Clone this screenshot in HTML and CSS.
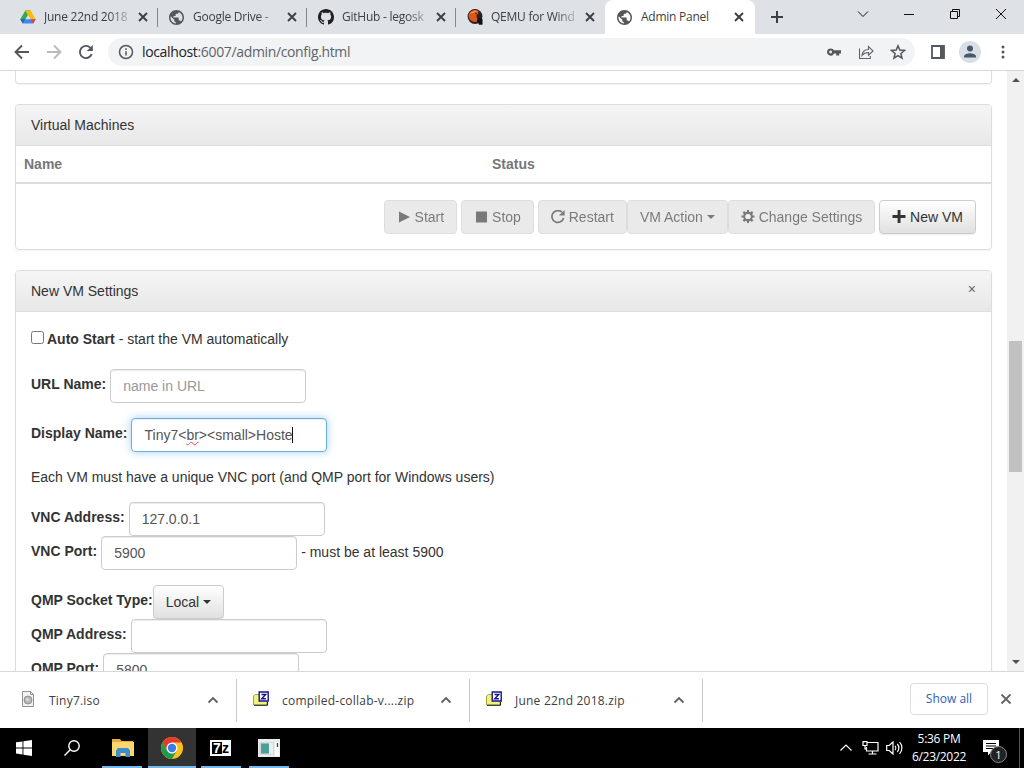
FILE: index.html
```html
<!DOCTYPE html>
<html lang="en">
<head>
    <meta charset="UTF-8">
    <meta name="viewport" content="width=device-width, initial-scale=1.0">
    <title>Admin Panel</title>
    <link rel="stylesheet" href="styles.css">
</head>
<body>
    <!-- Shared icons -->
    <svg class="defs" width="0" height="0">
        <symbol id="globe" viewBox="2 2 20 20"><path d="M12 2C6.48 2 2 6.48 2 12s4.48 10 10 10 10-4.48 10-10S17.52 2 12 2zm-1 17.93c-3.95-.49-7-3.85-7-7.93 0-.62.08-1.21.21-1.79L9 15v1c0 1.100.9 2 2 2v1.930zm6.900-2.540c-.26-.81-1-1.390-1.900-1.390h-1v-3c0-.55-.45-1-1-1H8v-2h2c.55 0 1-.45 1-1V7h2c1.100 0 2-.9 2-2v-.41c2.930 1.190 5 4.060 5 7.410 0 2.080-.8 3.970-2.100 5.390z"/></symbol>
        <symbol id="close" viewBox="0 0 16 16"><path d="M4 4l8 8M12 4l-8 8" fill="none" stroke="currentColor" stroke-width="1.9"/></symbol>
        <symbol id="up" viewBox="0 0 16 16"><path d="M3.500 10.500L8 6l4.500 4.500" fill="none" stroke="currentColor" stroke-width="1.900"/></symbol>
        <symbol id="zip" viewBox="0 0 16 16"><path d="M.5 5l2-1.500H14V13l-1 1H.5z" fill="#f2f37c" stroke="#a3a33c"/><path d="M1 14.300h13.500V11" stroke="#222" fill="none"/><path d="M6.200 1h9v9h-9z" fill="#fff" stroke="#14148a" stroke-width="1.400"/><path d="M8.500 3.500h4.200L8.700 7.800h4.200" fill="none" stroke="#14148a" stroke-width="1.400"/></symbol>
    </svg>

    <!-- Tab strip -->
    <div class="tabstrip">
        <div class="tab">
            <svg class="favicon" viewBox="0 0 16 16"><path d="M5.400 1.500h5.200L8 6z" fill="#188038"/><path d="M5.400 1.500L8 6l-5.200 8.500L.3 10.200z" fill="#34a853"/><path d="M5.400 1.500h5.200l5.100 8.700h-5.200z" fill="#fbbc04"/><path d="M5.500 10.200h10.200l-2.500 4.300H2.800z" fill="#4285f4"/><path d="M10.500 10.200h5.200l-2.500 4.300z" fill="#ea4335"/><path d="M.3 10.200h5.200l-2.700 4.300z" fill="#1967d2"/></svg>
            <span class="tab-title fade">June 22nd 2018</span>
            <svg class="tab-close"><use href="#close"/></svg>
        </div>
        <div class="tab">
            <svg class="favicon globe"><use href="#globe"/></svg>
            <span class="tab-title fade">Google Drive - </span>
            <svg class="tab-close"><use href="#close"/></svg>
        </div>
        <div class="tab">
            <svg class="favicon" viewBox="0 0 16 16"><path fill="#202124" d="M8 0C3.580 0 0 3.580 0 8c0 3.540 2.290 6.530 5.470 7.590.4.07.55-.17.55-.38 0-.19-.01-.82-.01-1.490-2.010.37-2.530-.49-2.690-.94-.09-.23-.48-.94-.82-1.130-.28-.15-.68-.52-.01-.53.63-.01 1.080.58 1.230.82.72 1.210 1.870.87 2.330.66.07-.52.28-.87.51-1.070-1.780-.2-3.640-.89-3.640-3.950 0-.87.31-1.590.82-2.150-.08-.2-.36-1.020.08-2.120 0 0 .67-.21 2.200.82.64-.18 1.320-.27 2-.27s1.360.09 2 .27c1.530-1.040 2.200-.82 2.200-.82.44 1.100.16 1.920.08 2.120.51.56.82 1.270.82 2.150 0 3.070-1.870 3.750-3.650 3.950.29.25.54.73.54 1.480 0 1.070-.01 1.930-.01 2.200 0 .21.15.46.55.38A8.010 8.010 0 0 0 16 8c0-4.420-3.580-8-8-8z"/></svg>
            <span class="tab-title fade">GitHub - legosk</span>
            <svg class="tab-close"><use href="#close"/></svg>
        </div>
        <div class="tab last">
            <svg class="favicon" viewBox="0 0 16 16"><circle cx="8" cy="7.500" r="7.400" fill="#26201e"/><path d="M9 9l6.500 1v5.800h-3.500z" fill="#111"/><path d="M1.500 7C2 2 7-.5 12 2c-1 1-1 1.500-.5 3-2.500.5-2.500 3-1 5l-1 3C5 13 2 11 1.500 7z" fill="#dd561d"/><path d="M3 5c2-3 5-3.500 7-2.500C7 3.500 5 4 3 5z" fill="#f59b63"/><circle cx="9" cy="4.500" r=".8" fill="#222"/></svg>
            <span class="tab-title fade">QEMU for Wind</span>
            <svg class="tab-close"><use href="#close"/></svg>
        </div>
        <div class="tab active">
            <svg class="favicon globe"><use href="#globe"/></svg>
            <span class="tab-title">Admin Panel</span>
            <svg class="tab-close"><use href="#close"/></svg>
        </div>
        <svg class="new-tab" viewBox="0 0 14 14"><path d="M7 1v12M1 7h12" stroke="#3c4043" stroke-width="2"/></svg>
        <div class="window-buttons">
            <svg viewBox="0 0 12 12"><path d="M1 3.500l5 5 5-5"/></svg>
            <svg viewBox="0 0 12 12"><path d="M1 6.500h10"/></svg>
            <svg viewBox="0 0 12 12"><path d="M1.500 3.500h7v7h-7zM3.500 3.500v-2h7v7h-2"/></svg>
            <svg viewBox="0 0 12 12"><path d="M1 1l10 10M11 1L1 11"/></svg>
        </div>
    </div>

    <!-- Address bar -->
    <div class="toolbar">
        <svg class="nav" viewBox="0 0 16 16"><path d="M15 8H2M8 1.500L1.500 8 8 14.500"/></svg>
        <svg class="nav off" viewBox="0 0 16 16"><path d="M1 8h13M8 1.500L14.500 8 8 14.500"/></svg>
        <svg class="nav" viewBox="0 0 16 16"><path d="M13.700 10.200A6.100 6.100 0 1 1 12.600 4"/><path d="M14.800 1v6h-6z" fill="#54575b" stroke="none"/></svg>
        <div class="omnibox">
            <svg class="info" viewBox="0 0 16 16"><circle cx="8" cy="8" r="6.500"/><path d="M8 7.200v4.300M8 4.300v1.700"/></svg>
            <span class="url"><b>localhost</b>:6007/admin/config.html</span>
            <svg viewBox="0 0 16 16"><path d="M4.600 4.400a3.600 3.600 0 1 0 3.400 5h2.200v2.200h3V9.400H15V6.300H8a3.600 3.600 0 0 0-3.400-1.900zm0 2.200a1.400 1.400 0 1 1 0 2.800 1.400 1.400 0 0 1 0-2.800z" fill="#54575b" fill-rule="evenodd"/></svg>
            <svg viewBox="0 0 16 16"><path d="M1.500 4.500v10h10.800V12M4 11.500c.5-4 3-6 6.500-6V2.500l4.500 4.400-4.500 4.300V8.500C7.500 8.500 5.500 9.500 4 11.500z" fill="none" stroke="#5f6368" stroke-width="1.100"/></svg>
            <svg viewBox="0 0 16 16"><path d="M8 1.800l1.800 4.300 4.700.4-3.600 3 1.100 4.600-4-2.500-4 2.500 1.100-4.600-3.600-3 4.700-.4z" fill="none" stroke="#54575b" stroke-width="1.500"/></svg>
        </div>
        <svg class="sidepanel" viewBox="0 0 14 14"><path d="M1 1h12v12H1z" fill="none" stroke="#54575b" stroke-width="1.800"/><path d="M9 1h4v12H9z" fill="#54575b"/></svg>
        <svg class="profile" viewBox="0 0 22 22"><circle cx="11" cy="11" r="11" fill="#dadfe5"/><circle cx="11" cy="7.600" r="3" fill="#47586b"/><path d="M5 16.500v-1.300c0-2 4-3 6-3s6 1 6 3v1.300z" fill="#47586b"/></svg>
        <svg class="menu" viewBox="0 0 4 14"><circle cx="2" cy="2" r="1.500"/><circle cx="2" cy="7" r="1.500"/><circle cx="2" cy="12" r="1.500"/></svg>
    </div>

    <!-- Page -->
    <div class="viewport">
        <div class="page">
            <div class="panel panel-end"></div>

            <div class="panel">
                <div class="panel-heading">Virtual Machines</div>
                <div class="table-head"><span>Name</span><span>Status</span></div>
                <div class="vm-actions">
                    <button class="btn" disabled><svg viewBox="0 0 14 14"><path d="M2 1.500L13 7 2 12.500z"/></svg> Start</button>
                    <button class="btn" disabled><svg viewBox="0 0 14 14"><path d="M2 1.500h11v11H2z"/></svg> Stop</button>
                    <div class="btn-row">
                        <button class="btn" disabled><svg viewBox="0 0 14 14"><path d="M12.600 8A5.900 5.900 0 1 1 10.900 2.200" fill="none" stroke="currentColor" stroke-width="1.700"/><path d="M13.600 0v5.600H8z"/></svg> Restart</button>
                        <button class="btn" disabled>VM Action <i class="caret"></i></button>
                        <button class="btn" disabled><svg viewBox="0 0 14 14"><circle cx="7" cy="6.500" r="3.700" fill="none" stroke="currentColor" stroke-width="2.200"/><path d="M7 0v3M7 10v3M.5 6.500h3M10.500 6.500h3M2.400 1.900l2 2M9.600 9.100l2 2M11.600 1.900l-2 2M4.400 9.100l-2 2" fill="none" stroke="currentColor" stroke-width="2.200"/><circle cx="7" cy="6.500" r="2.600" fill="#e8e8e8"/></svg> Change Settings</button>
                    </div>
                    <button class="btn"><svg viewBox="0 0 14 14"><path d="M5.600 0h2.900v5.100h5v2.900h-5v5H5.600V8H.5V5.100h5.100z"/></svg> New VM</button>
                </div>
            </div>

            <div class="panel">
                <div class="panel-heading">New VM Settings <span class="dismiss">×</span></div>
                <form class="settings">
                    <div class="check-row"><input type="checkbox" id="autostart"><label for="autostart">Auto Start</label><span>- start the VM automatically</span></div>
                    <div class="row spaced">
                        <label for="url">URL Name:</label>
                        <input class="form-control" type="text" id="url" placeholder="name in URL">
                    </div>
                    <div class="row spaced">
                        <label>Display Name:</label>
                        <div class="form-control focused">Tiny7&lt;<span class="misspelled">br</span>&gt;&lt;small&gt;Hoste<i class="cursor"></i></div>
                    </div>
                    <p>Each VM must have a unique VNC port (and QMP port for Windows users)</p>
                    <div class="row">
                        <label for="vnc_address">VNC Address:</label>
                        <input class="form-control" type="text" id="vnc_address" value="127.0.0.1">
                    </div>
                    <div class="row spaced">
                        <label for="vnc_port">VNC Port:</label>
                        <input class="form-control" type="text" id="vnc_port" value="5900">
                        <span class="hint">- must be at least 5900</span>
                    </div>
                    <div class="row tight">
                        <label>QMP Socket Type:</label>
                        <button type="button" class="btn">Local <i class="caret"></i></button>
                    </div>
                    <div class="row">
                        <label for="qmp_address">QMP Address:</label>
                        <input class="form-control" type="text" id="qmp_address">
                    </div>
                    <div class="row">
                        <label for="qmp_port">QMP Port:</label>
                        <input class="form-control" type="text" id="qmp_port" value="5800">
                    </div>
                </form>
            </div>
        </div>
        <div class="scrollbar">
            <i class="arrow-up"></i>
            <div class="thumb"></div>
            <i class="arrow-down"></i>
        </div>
    </div>

    <!-- Downloads -->
    <div class="downloads">
        <div class="download">
            <svg class="file" viewBox="0 0 16 16"><path d="M2.500.5h8l3 3v12h-11z" fill="#f3f3f3" stroke="#929292"/><path d="M10.500.5v3h3" fill="none" stroke="#929292"/><circle cx="8" cy="9" r="4" fill="#b5b8ba" stroke="#8f9496"/><circle cx="7.500" cy="8.500" r="1.500" fill="#dcdcdc"/></svg>
            <span>Tiny7.iso</span>
            <svg class="up"><use href="#up"/></svg>
        </div>
        <div class="download">
            <svg class="file"><use href="#zip"/></svg>
            <span>compiled-collab-v....zip</span>
            <svg class="up"><use href="#up"/></svg>
        </div>
        <div class="download">
            <svg class="file"><use href="#zip"/></svg>
            <span>June 22nd 2018.zip</span>
            <svg class="up"><use href="#up"/></svg>
        </div>
        <button class="show-all">Show all</button>
        <svg class="shelf-close" viewBox="0 0 12 12"><path d="M1.500 1.500l9 9M10.500 1.500l-9 9" stroke="#5f6368" stroke-width="1.800"/></svg>
    </div>

    <!-- Taskbar -->
    <div class="taskbar">
        <div class="task"><svg width="16" height="16" viewBox="0 0 16 16"><path d="M0 2.300l6.500-.9v6.100H0zM7.400 1.200L16 0v7.500H7.400zM0 8.400h6.500v6.100L0 13.600zM7.400 8.400H16V16l-8.600-1.200z" fill="#fff"/></svg></div>
        <div class="task"><svg width="16" height="16" viewBox="0 0 16 16"><circle cx="10" cy="6" r="5.200" fill="none" stroke="#fff" stroke-width="1.400"/><path d="M6.200 9.800L.5 15.500" stroke="#fff" stroke-width="1.500"/></svg></div>
        <div class="task open">
            <svg width="22" height="20" viewBox="0 0 22 20"><path d="M0 1h8l1.500 2H21v15H0z" fill="#e8ad3c"/><path d="M0 4h22v14H0z" fill="#fbd670"/><path d="M4 19v-6.500L6 10h10l2 2.500V19h-4.500v-4h-5v4z" fill="#3d8ecf"/></svg>
        </div>
        <div class="task open current">
            <svg width="22" height="22" viewBox="0 0 22 22"><circle cx="11" cy="11" r="11" fill="#fbc116"/><path d="M1.500 5.500A11 11 0 0 1 20.500 5.500H11L6.200 13.700z" fill="#e33b2e"/><path d="M1.500 5.500A11 11 0 0 0 11 22l4.800-8.200-4.800 2.700-4.800-2.800z" fill="#229a4b"/><circle cx="11" cy="11" r="5.500" fill="#fff"/><circle cx="11" cy="11" r="4.200" fill="#3b7de8"/></svg>
        </div>
        <div class="task open short"><span class="sevenzip"><b>7</b>z</span></div>
        <div class="task open">
            <svg width="22" height="18" viewBox="0 0 22 18"><path d="M0 0h22v18H0z" fill="#e9ecec"/><path d="M1 3h15v13H1z" fill="#d4dddd"/><path d="M3 4.500h8v10H3z" fill="#4e9f97"/><path d="M12 4v11M14 4v11" stroke="#fff"/><path d="M17 3h4v14h-4z" fill="#fafafa"/><path d="M19.500 4v4" stroke="#444" stroke-width="1.300"/></svg>
        </div>
        <div class="tray">
            <svg class="tray-up" width="12" height="8" viewBox="0 0 12 8"><path d="M.5 6.500L6 1l5.500 5.500"/></svg>
            <svg class="net" width="17" height="14" viewBox="0 0 17 14"><path d="M5 1.500h11v8.500H4.500V6M10.500 10v3M6.500 13h8M1 .7h4v3.800H1zM3 4.500V8h1.500"/></svg>
            <svg class="sound" width="17" height="14" viewBox="0 0 17 14"><path d="M.7 4.500h2.500L7 1v12L3.200 9.500H.7zM9 5c1 1 1 3 0 4M11.300 3c2 2.200 2 5.800 0 8M13.600 1.200c3 3 3 8.600 0 11.600"/></svg>
            <div class="clock"><span>5:36 PM</span><span>6/23/2022</span></div>
            <div class="notifications">
                <svg width="16" height="16" viewBox="0 0 16 16"><path d="M0 0h16v12H8l-3 3.500V12H0z" fill="#fff"/><path d="M3 3.500h10M3 6h10M3 8.500h7" stroke="#000"/></svg>
                <span class="badge">1</span>
            </div>
        </div>
    </div>
</body>
</html>
```

FILE: styles.css
```css
* {
    box-sizing: border-box;
}

body {
    display: flex;
    flex-direction: column;
    width: 1024px;
    height: 768px;
    margin: 0;
    overflow: hidden;
    background: #fff;
    font-family: "Open Sans", "Noto Sans", sans-serif;
    font-size: 12px;
    color: #3c4043;
}

svg {
    flex: none;
}

.defs {
    position: absolute;
}

/* Tab strip */
.tabstrip {
    display: flex;
    flex: none;
    height: 34px;
    padding-left: 9px;
    background: #dee1e6;
}

.tab {
    display: flex;
    align-items: center;
    width: 149px;
    padding-left: 11px;
    background: linear-gradient(#85888c, #85888c) right 8px / 1px 19px no-repeat;
}

.tab.last {
    background: none;
}

.tab.active {
    width: 150px;
    padding-left: 12px;
    background: #fff;
    border-radius: 8px 8px 0 0;
}

.favicon {
    width: 16px;
    height: 16px;
}

.globe {
    width: 15px;
    height: 15px;
    margin-right: 1px;
    fill: #54575b;
}

.tab-title {
    width: 86px;
    height: 18px;
    margin-left: 8px;
    line-height: 17px;
    white-space: nowrap;
    letter-spacing: -0.25px;
}

.fade {
    -webkit-mask-image: linear-gradient(90deg, #000 75%, rgba(0, 0, 0, .2));
    mask-image: linear-gradient(90deg, #000 75%, rgba(0, 0, 0, .2));
}

.tab-close {
    width: 16px;
    height: 16px;
    margin-left: 5px;
}

.active .tab-close {
    margin-left: 4px;
}

.new-tab {
    width: 14px;
    height: 14px;
    margin: 10px 0 0 15px;
}

.window-buttons {
    display: flex;
    gap: 34px;
    margin: 8px 17px 0 auto;
}

.window-buttons svg {
    width: 12px;
    height: 12px;
    fill: none;
    stroke: #111;
}

/* Address bar */
.toolbar {
    display: flex;
    flex: none;
    align-items: center;
    height: 37px;
    padding-left: 14px;
    border-bottom: 1px solid #d5d7da;
}

.nav {
    width: 16px;
    height: 16px;
    margin-right: 16px;
    fill: none;
    stroke: #54575b;
    stroke-width: 1.9;
}

.nav.off {
    stroke: #b9bbbe;
}

.omnibox {
    display: flex;
    align-items: center;
    width: 807px;
    height: 28px;
    margin-left: -2px;
    padding: 0 9px 0 10px;
    border-radius: 14px;
    background: #f1f3f4;
}

.omnibox svg {
    width: 16px;
    height: 16px;
    margin-left: 16px;
}

.omnibox .info {
    margin: 0 8px 0 0;
    fill: none;
    stroke: #54575b;
    stroke-width: 1.5;
}

.url {
    margin-right: auto;
    font-size: 14px;
    line-height: 18px;
    letter-spacing: -0.35px;
    color: #5f6368;
    white-space: nowrap;
}

.url b {
    font-weight: normal;
    color: #202124;
}

.sidepanel {
    width: 14px;
    height: 14px;
    margin-left: 16px;
}

.profile {
    width: 22px;
    height: 22px;
    margin-left: 14px;
}

.menu {
    width: 4px;
    height: 14px;
    margin-left: 20px;
    fill: #54575b;
}

/* Page */
.viewport {
    display: flex;
    flex: none;
    height: 600px;
    overflow: hidden;
}

.page {
    width: 1007px;
    padding: 0 15px;
    font-family: "Liberation Sans", Arial, sans-serif;
    font-size: 14px;
    line-height: 20px;
    color: #333;
}

.panel {
    margin-bottom: 20px;
    border: 1px solid #ddd;
    border-radius: 4px;
    box-shadow: 0 1px 2px rgba(0, 0, 0, .05);
}

.panel-end {
    height: 13px;
    border-top: 0;
    border-radius: 0 0 4px 4px;
}

.panel-heading {
    display: flex;
    justify-content: space-between;
    padding: 10px 15px;
    border-bottom: 1px solid #ddd;
    border-radius: 3px 3px 0 0;
    background: linear-gradient(#f5f5f5, #e8e8e8);
}

.dismiss {
    margin-top: -2px;
    color: #666;
}

.table-head {
    display: grid;
    grid-template-columns: 468px 1fr;
    padding: 8px;
    border-bottom: 2px solid #ddd;
    font-weight: bold;
    color: #777;
}

.vm-actions {
    display: flex;
    justify-content: flex-end;
    gap: 4px;
    padding: 16px 15px 15px;
}

.btn-row {
    display: flex;
}

.btn {
    display: flex;
    align-items: center;
    height: 34px;
    padding: 6px 12px;
    border: 1px solid #ccc;
    border-radius: 4px;
    background: linear-gradient(#fff, #e0e0e0);
    box-shadow: inset 0 1px 0 rgba(255, 255, 255, .15), 0 1px 1px rgba(0, 0, 0, .075);
    font-family: inherit;
    font-size: 14px;
    line-height: 20px;
    color: #333;
    white-space: pre;
}

.btn:disabled {
    background: #e0e0e0;
    border-color: #ccc;
    box-shadow: none;
    opacity: .65;
}

.btn svg {
    width: 14px;
    height: 14px;
    fill: currentColor;
}

.caret {
    border-top: 4px solid;
    border-right: 4px solid transparent;
    border-left: 4px solid transparent;
}

/* VM settings form */
.settings {
    padding: 17px 15px;
}

.settings label {
    font-weight: bold;
}

.check-row {
    display: flex;
    gap: 4px;
    margin-bottom: 20px;
}

.check-row input {
    width: 13px;
    height: 13px;
    margin: 2px -1px 0 0;
}

.row {
    display: flex;
    align-items: center;
    height: 34px;
}

.row label {
    margin-right: 4px;
    padding-bottom: 4px;
}

.row.spaced {
    margin-bottom: 15px;
}

.row.tight label {
    margin-right: 0;
}

.settings p {
    margin: 0 0 15px;
}

.form-control {
    width: 196px;
    height: 34px;
    padding: 6px 12px;
    border: 1px solid #ccc;
    border-radius: 4px;
    background: #fff;
    box-shadow: inset 0 1px 1px rgba(0, 0, 0, .075);
    font-family: inherit;
    font-size: 14px;
    line-height: 20px;
    color: #555;
}

.form-control::placeholder {
    color: #999;
}

.focused {
    border-color: #66afe9;
    box-shadow: inset 0 1px 1px rgba(0, 0, 0, .075), 0 0 8px rgba(102, 175, 233, .6);
}

.misspelled {
    text-decoration: underline wavy #e2504c 0.7px;
    text-underline-offset: 1px;
}

.cursor {
    display: inline-block;
    width: 1px;
    height: 16px;
    margin-left: -1px;
    background: #111;
    vertical-align: -3px;
}

.hint {
    margin-left: 4px;
    padding-bottom: 2px;
}

.scrollbar {
    display: flex;
    flex-direction: column;
    align-items: center;
    width: 17px;
    padding: 7px 0;
    background: #f1f1f1;
}

.arrow-up,
.arrow-down {
    border: 4px solid transparent;
}

.arrow-up {
    border-top: 0;
    border-bottom-color: #505050;
}

.arrow-down {
    margin-top: auto;
    border-bottom: 0;
    border-top-color: #505050;
}

.thumb {
    width: 13px;
    height: 131px;
    margin-top: 259px;
    background: #c1c1c1;
}

/* Downloads */
.downloads {
    display: flex;
    flex: none;
    align-items: center;
    height: 57px;
    padding-left: 4px;
    border-top: 1px solid #d5d7da;
}

.download {
    display: flex;
    align-items: center;
    width: 233px;
    height: 43px;
    padding: 0 15px 0 16px;
    border-right: 1px solid #c6c8ca;
    letter-spacing: 0.22px;
}

.file {
    width: 16px;
    height: 16px;
    margin: 0 13px 3px 0;
}

.up {
    width: 16px;
    height: 16px;
    margin-left: auto;
    color: #5f6368;
}

.show-all {
    width: 78px;
    height: 32px;
    margin: 0 12px 2px auto;
    padding: 0 0 2px;
    border: 1px solid #dadce0;
    border-radius: 4px;
    background: #fff;
    font: 500 12px "Open Sans", sans-serif;
    color: #2f62b5;
}

.shelf-close {
    width: 12px;
    height: 12px;
    margin: 0 12px 3px 0;
}

/* Taskbar */
.taskbar {
    display: flex;
    flex: none;
    height: 40px;
    padding-right: 4px;
    background: #000;
}

.task {
    display: flex;
    align-items: center;
    justify-content: center;
    width: 48px;
}

.task.open {
    width: 49px;
    background: linear-gradient(#76b9ed, #76b9ed) center bottom / 40px 2px no-repeat;
}

.task.open:nth-child(3) {
    width: 52px;
    padding-left: 2px;
}

.task.current {
    width: 48px;
    background-color: #333;
    background-size: 48px 2px;
}

.task:nth-child(6) {
    width: 47px;
}

.sevenzip {
    display: flex;
    align-items: center;
    justify-content: center;
    width: 21px;
    height: 16px;
    border: 2px solid #fff;
    background: #fff;
    font: bold 14px/12px "Liberation Sans", sans-serif;
    color: #000;
}

.sevenzip b {
    padding: 0 1px;
    background: #000;
    color: #fff;
}

.tray {
    display: flex;
    align-items: center;
    margin-left: auto;
    padding-right: 20px;
    border-right: 1px solid #555;
}

.tray svg {
    fill: none;
    stroke: #fff;
    stroke-width: 1.2;
}

.net {
    margin-left: 10px;
}

.sound {
    margin-left: 7px;
}

.clock {
    display: flex;
    flex-direction: column;
    align-items: center;
    width: 60px;
    margin: 0 14px 0 6px;
    line-height: 18px;
    color: #fff;
    letter-spacing: -0.3px;
}

.notifications {
    position: relative;
    display: flex;
}

.tray .notifications svg {
    stroke: none;
}

.badge {
    position: absolute;
    top: 6px;
    left: 7px;
    width: 17px;
    height: 17px;
    border: 1px solid #888;
    border-radius: 50%;
    background: #222;
    font-size: 11px;
    line-height: 15px;
    text-align: center;
    color: #fff;
}
```
